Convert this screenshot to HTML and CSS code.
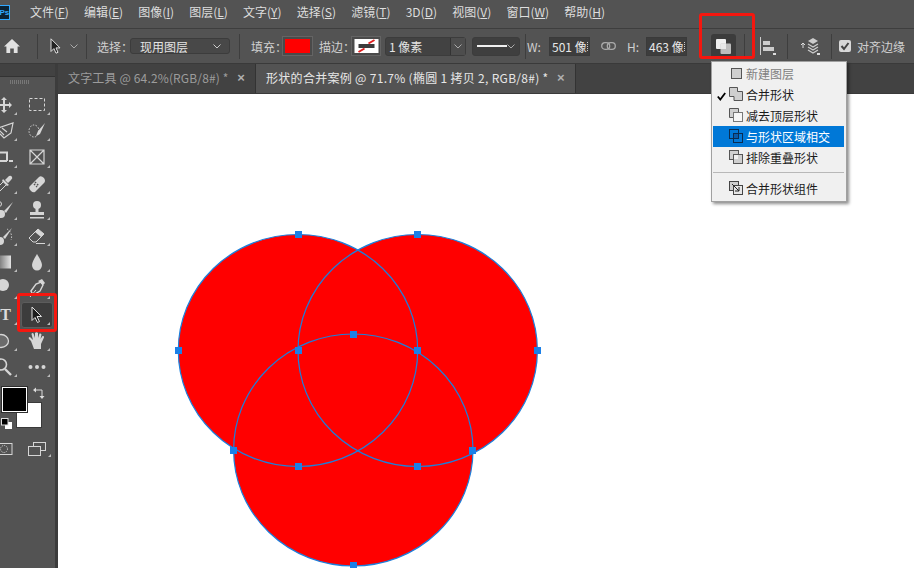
FILE: index.html
```html
<!DOCTYPE html>
<html lang="zh">
<head>
  <meta charset="UTF-8">
  <title>形状的合并案例</title>
  <link rel="stylesheet" href="styles.css">
</head>
<body>
  <nav class="menubar">
    <span class="ps-logo">Ps</span>
    <span class="menu-item">文件(<u>F</u>)</span>
    <span class="menu-item">编辑(<u>E</u>)</span>
    <span class="menu-item">图像(<u>I</u>)</span>
    <span class="menu-item">图层(<u>L</u>)</span>
    <span class="menu-item">文字(<u>Y</u>)</span>
    <span class="menu-item">选择(<u>S</u>)</span>
    <span class="menu-item">滤镜(<u>T</u>)</span>
    <span class="menu-item">3D(<u>D</u>)</span>
    <span class="menu-item">视图(<u>V</u>)</span>
    <span class="menu-item">窗口(<u>W</u>)</span>
    <span class="menu-item">帮助(<u>H</u>)</span>
  </nav>

  <div class="options">
    <svg class="home-icon" width="16" height="14" viewBox="0 0 16 14"><path d="M8 0 L16 7.500 H13.600 V14 H9.800 V9.500 H6.200 V14 H2.400 V7.500 H0 Z" fill="#e2e2e2"/></svg>
    <i class="sep sep-home"></i>
    <svg class="arrow-icon" width="11" height="16" viewBox="0 0 11 16"><path d="M1 .8 V13.500 L3.900 10.600 L6 15.200 L8 14.300 L6 9.900 H10 Z" fill="#222" stroke="#e0e0e0"/></svg>
    <svg class="caret caret-tool" width="8" height="5" viewBox="0 0 8 5"><path d="M.5 .5 L4 4 L7.500 .5" fill="none" stroke="#aaa"/></svg>
    <i class="sep sep-tool"></i>
    <span class="opt-label label-select">选择：</span>
    <div class="dropdown dropdown-layer">现用图层
      <svg class="caret" width="8" height="5" viewBox="0 0 8 5"><path d="M.5 .5 L4 4 L7.500 .5" fill="none" stroke="#ccc"/></svg>
    </div>
    <i class="sep sep-layer"></i>
    <span class="opt-label label-fill">填充：</span>
    <div class="swatch-box"><div class="swatch swatch-red"></div></div>
    <span class="opt-label label-stroke">描边：</span>
    <div class="swatch-box stroke-box">
      <svg class="swatch" width="24" height="14" viewBox="0 0 24 14">
        <rect width="24" height="14" fill="#fff"/>
        <rect x="4" y="5" width="16" height="4" fill="#3c3c3c"/>
        <path d="M20 1 L14 4.500 M10 9.500 L4 13" stroke="#e02020" stroke-width="2"/>
      </svg>
    </div>
    <div class="dropdown dropdown-size"><span class="size-text">1 像素</span><span class="size-arrow"><svg width="8" height="5" viewBox="0 0 8 5"><path d="M.5 .5 L4 4 L7.500 .5" fill="none" stroke="#aaa"/></svg></span></div>
    <div class="dropdown dropdown-line"><i class="line-sample"></i>
      <svg class="caret" width="8" height="5" viewBox="0 0 8 5"><path d="M.5 .5 L4 4 L7.500 .5" fill="none" stroke="#aaa"/></svg>
    </div>
    <i class="sep sep-line"></i>
    <span class="opt-label label-w">W:</span>
    <div class="num-field">501 像</div>
    <svg class="link-icon" width="15" height="8" viewBox="0 0 15 8"><rect x=".7" y=".7" width="8" height="6.600" rx="3.300" fill="none" stroke="#aaa" stroke-width="1.300"/><rect x="6.300" y=".7" width="8" height="6.600" rx="3.300" fill="none" stroke="#aaa" stroke-width="1.300"/></svg>
    <span class="opt-label label-h">H:</span>
    <div class="num-field">463 像</div>
    <div class="shape-btn with-mark">
      <svg width="15" height="15" viewBox="0 0 15 15"><rect x="0" y="0" width="10" height="10" rx="1" fill="#f0f0f0"/><rect x="4.500" y="4.500" width="10.500" height="10.500" rx="1" fill="#bdbdbd"/><path d="M4.500 4.500 H10 V10 H4.500 Z" fill="#e8e8e8"/></svg>
    </div>
    <i class="sep sep-shape"></i>
    <span class="align-icon with-mark"><svg width="15" height="18" viewBox="0 0 15 18"><path d="M.5 0 V18" stroke="#ccc"/><rect x="3" y="4" width="7" height="4" fill="#ccc"/><rect x="3" y="10" width="11" height="4" fill="#ccc"/></svg></span>
    <i class="sep sep-align"></i>
    <span class="stack-icon with-mark"><svg width="19" height="18" viewBox="0 0 19 18"><path d="M3 6 V11 M1 8 L3 6 L5 8" fill="none" stroke="#ddd"/><path d="M13 1 L18 4 L13 7 L8 4 Z" fill="#ccc"/><path d="M8 7 L13 10 L18 7 M8 10 L13 13 L18 10 M8 13 L13 16 L18 13" fill="none" stroke="#ccc" stroke-width="1.300"/></svg></span>
    <i class="sep sep-stack"></i>
    <span class="check-box"><svg width="12" height="12" viewBox="0 0 12 12"><path d="M2.500 6 L5 9 L9.500 3" fill="none" stroke="#444" stroke-width="2"/></svg></span>
    <span class="opt-label label-edges">对齐边缘</span>
  </div>

  <div class="workspace">
    <aside class="toolbar">
      <div class="toolbar-head"></div>
      <i class="grip"></i>
      <div class="tool-grid">
        <div class="tool"><svg width="20" height="20" viewBox="0 0 20 20"><path d="M10 2 L13 5 H11 V9 H15 V7 L18 10 L15 13 V11 H11 V15 H13 L10 18 L7 15 H9 V11 H5 V13 L2 10 L5 7 V9 H9 V5 H7 Z" fill="#d6d6d6"/></svg></div>
        <div class="tool"><svg width="20" height="20" viewBox="0 0 20 20"><rect x="2.500" y="3.500" width="15" height="12" fill="none" stroke="#d6d6d6" stroke-dasharray="3 2"/></svg></div>
        <div class="tool"><svg width="20" height="20" viewBox="0 0 20 20"><path d="M1 8 L19 2 L17 12 L10 17 L6 13 L1 14 M5 9 L10 14 M8 7 L13 11" fill="none" stroke="#d6d6d6" stroke-width="1.200"/></svg></div>
        <div class="tool"><svg width="20" height="20" viewBox="0 0 20 20"><ellipse cx="7" cy="10" rx="5" ry="6" fill="none" stroke="#d6d6d6" stroke-dasharray="1.500 1.500"/><path d="M18 2 L11 10 L9 15 L13 13 Z" fill="#d6d6d6"/></svg></div>
        <div class="tool"><svg width="20" height="20" viewBox="0 0 20 20"><path d="M0 5.500 H13 V14 M0 14 H13 M15 14 H19" fill="none" stroke="#d6d6d6" stroke-width="2"/></svg></div>
        <div class="tool"><svg width="20" height="20" viewBox="0 0 20 20"><path d="M3 3 H17 V17 H3 Z M3 3 L17 17 M17 3 L3 17" fill="none" stroke="#d6d6d6" stroke-width="1.200"/></svg></div>
        <div class="tool"><svg width="20" height="20" viewBox="0 0 20 20"><path d="M10 7 L2 15 L1 19 L5 18 L13 10 Z" fill="none" stroke="#d6d6d6"/><path d="M9 5 L15 11 L13 12 L8 7 Z M11 6 L15 2 Q17 1 18 3 Q19 4 17 6 L14 9 Z" fill="#d6d6d6"/></svg></div>
        <div class="tool"><svg width="20" height="20" viewBox="0 0 20 20"><path d="M3 12 L12 3 Q14 1 17 4 Q19 7 17 9 L8 18 Q6 19 4 17 Q1 14 3 12 Z" fill="#d6d6d6"/><path d="M8 8 L12 12 M7 10 L10 13" stroke="#535353" stroke-width="1.500" stroke-dasharray="1.500 1.500"/></svg></div>
        <div class="tool"><svg width="20" height="20" viewBox="0 0 20 20"><path d="M19 2 L10 11 L12 13 Z" fill="#d6d6d6"/><circle cx="7" cy="14" r="4" fill="#d6d6d6"/><circle cx="5" cy="4" r="2.500" fill="none" stroke="#d6d6d6"/></svg></div>
        <div class="tool"><svg width="20" height="20" viewBox="0 0 20 20"><circle cx="10" cy="5" r="4" fill="#d6d6d6"/><path d="M8.500 8 H11.500 V12 H17 V15 H3 V12 H8.500 Z" fill="#d6d6d6"/><rect x="3" y="17" width="14" height="1.500" fill="#d6d6d6"/></svg></div>
        <div class="tool"><svg width="20" height="20" viewBox="0 0 20 20"><path d="M18 2 L9 11 L11 13 Z" fill="#d6d6d6"/><circle cx="6" cy="15" r="4" fill="#d6d6d6"/><path d="M13 3 A9 9 0 0 1 17 14" fill="none" stroke="#d6d6d6" stroke-dasharray="1.500 1.500"/></svg></div>
        <div class="tool"><svg width="20" height="20" viewBox="0 0 20 20"><path d="M2 12 L11 3 L17 8 L9 16 H6 Z" fill="none" stroke="#d6d6d6"/><path d="M8 6 L11 3 L17 8 L14 11 Z" fill="#d6d6d6"/><path d="M9 17.500 H18" stroke="#d6d6d6"/></svg></div>
        <div class="tool"><svg width="20" height="20" viewBox="0 0 20 20"><defs><linearGradient id="grad"><stop offset="0" stop-color="#3a3a3a"/><stop offset="1" stop-color="#e4e4e4"/></linearGradient></defs><rect x="-2" y="3.500" width="19" height="13" fill="url(#grad)"/></svg></div>
        <div class="tool"><svg width="20" height="20" viewBox="0 0 20 20"><path d="M10 2 Q15 10 15 13 A5 5.500 0 0 1 5 13 Q5 10 10 2 Z" fill="#d6d6d6"/></svg></div>
        <div class="tool"><svg width="20" height="20" viewBox="0 0 20 20"><circle cx="9" cy="7" r="6" fill="#d6d6d6"/><path d="M4 12 L-1 17" stroke="#d6d6d6" stroke-width="3"/></svg></div>
        <div class="tool"><svg width="20" height="20" viewBox="0 0 20 20"><path d="M4 13 L9 6 L14 4 L16 7 L13 13 L6 17 Z" fill="none" stroke="#d6d6d6" stroke-width="1.400"/><path d="M11 3 L15 1 L18 5 L16 7 Z" fill="#d6d6d6"/><path d="M3 19 L9 12" stroke="#d6d6d6"/></svg></div>
        <div class="tool tool-text">T</div>
        <div class="tool tool-active"><svg width="20" height="20" viewBox="0 0 20 20"><path d="M5 2 V15.500 L8 12.500 L10.500 17.500 L12.500 16.500 L10 11.500 H14.500 Z" fill="#1c1c1c" stroke="#e0e0e0"/></svg></div>
        <div class="tool"><svg width="20" height="20" viewBox="0 0 20 20"><ellipse cx="7" cy="10" rx="7.500" ry="6.500" fill="#6b6b6b" stroke="#d6d6d6" stroke-width="1.300"/></svg></div>
        <div class="tool"><svg width="20" height="20" viewBox="0 0 20 20"><path d="M4 10 L2 8 Q1 6 3 6 L6 9 L4.500 3 Q5 1.500 6.500 2.500 L8 7 V2 Q9.500 .5 11 2 V7 L12.500 2.500 Q14 2 14.500 3.500 L13.500 8 L15.500 5 Q17.500 4.500 17 6.500 L14 13 V18 H7 Z" fill="#d6d6d6"/></svg></div>
        <div class="tool"><svg width="20" height="20" viewBox="0 0 20 20"><circle cx="7" cy="7.500" r="5.500" fill="none" stroke="#d6d6d6" stroke-width="1.600"/><path d="M11 12 L17 18" stroke="#d6d6d6" stroke-width="2.400"/></svg></div>
        <div class="tool"><svg width="20" height="20" viewBox="0 0 20 20"><circle cx="3.500" cy="10" r="2" fill="#d6d6d6"/><circle cx="10" cy="10" r="2" fill="#d6d6d6"/><circle cx="16.500" cy="10" r="2" fill="#d6d6d6"/></svg></div>
      </div>

      <div class="colors">
        <div class="color-fg"></div>
        <div class="color-bg"></div>
        <svg class="color-swap" width="12" height="12" viewBox="0 0 12 12"><path d="M2 3 H9 V9" fill="none" stroke="#ddd"/><path d="M0 3 L3 .5 V5.500 Z M9 12 L6.500 9 H11.500 Z" fill="#ddd"/></svg>
        <svg class="color-default" width="11" height="11" viewBox="0 0 11 11"><rect x="4" y="4" width="7" height="7" fill="#fff"/><rect x=".5" y=".5" width="6.500" height="6.500" fill="#000" stroke="#ddd"/></svg>
      </div>

      <div class="tool-bottom">
        <svg width="14" height="13" viewBox="0 0 14 13"><rect x="-3" y=".5" width="15" height="11" fill="none" stroke="#d6d6d6"/><circle cx="4" cy="6" r="3.500" fill="none" stroke="#d6d6d6" stroke-dasharray="1 1"/></svg>
        <span class="screen-mode"><svg width="18" height="14" viewBox="0 0 18 14"><rect x="5.500" y=".5" width="12" height="8" fill="none" stroke="#d6d6d6"/><rect x=".5" y="4.500" width="12" height="9" fill="#535353" stroke="#d6d6d6"/></svg></span>
      </div>
    </aside>

    <div class="doc-area">
      <div class="tabs">
        <div class="tab tab-off"><span>文字工具 @ 64.2%(RGB/8#) *</span><span class="tab-close">×</span></div>
        <div class="tab tab-on"><span>形状的合并案例 @ 71.7% (椭圆 1 拷贝 2, RGB/8#) *</span><span class="tab-close">×</span></div>
      </div>
      <div class="canvas">
        <svg class="art" width="856" height="474" viewBox="58 94 856 474">
          <g fill="#ff0000">
            <ellipse cx="298" cy="350.500" rx="119.700" ry="116"/>
            <ellipse cx="417.700" cy="350.500" rx="119.700" ry="116"/>
            <ellipse cx="353.300" cy="450" rx="119.700" ry="116"/>
          </g>
          <g fill="none" stroke="#1b80dd" stroke-width="1.200">
            <ellipse cx="298" cy="350.500" rx="119.700" ry="116"/>
            <ellipse cx="417.700" cy="350.500" rx="119.700" ry="116"/>
            <ellipse cx="353.300" cy="450" rx="119.700" ry="116"/>
          </g>
          <g fill="#1b80e8">
            <rect x="295" y="231" width="7" height="7"/>
            <rect x="414" y="231" width="7" height="7"/>
            <rect x="175" y="347" width="7" height="7"/>
            <rect x="295" y="347" width="7" height="7"/>
            <rect x="414" y="347" width="7" height="7"/>
            <rect x="534" y="347" width="7" height="7"/>
            <rect x="350" y="331" width="7" height="7"/>
            <rect x="230" y="447" width="7" height="7"/>
            <rect x="469" y="447" width="7" height="7"/>
            <rect x="295" y="463" width="7" height="7"/>
            <rect x="414" y="463" width="7" height="7"/>
            <rect x="350" y="562" width="7" height="7"/>
          </g>
        </svg>
      </div>
    </div>
  </div>

  <ul class="shape-menu">
    <li class="menu-row row-disabled"><svg width="14" height="14" viewBox="0 0 14 14"><rect x="2.500" y="2.500" width="10" height="10" fill="#cfcfcf" stroke="#555"/></svg>新建图层</li>
    <li class="menu-row"><svg class="row-check" width="9" height="9" viewBox="0 0 9 9"><path d="M.8 4.500 L3.300 7.500 L8.200 1" fill="none" stroke="#000" stroke-width="1.800"/></svg><svg width="14" height="14" viewBox="0 0 14 14"><path d="M.5 .5 H8.500 V4.500 H13.500 V13.500 H5 V9.500 H.5 Z" fill="#cfcfcf" stroke="#555"/></svg>合并形状</li>
    <li class="menu-row"><svg width="14" height="14" viewBox="0 0 14 14"><path d="M.5 9.500 V.5 H9.500 V4.500 H4.500 V9.500 Z" fill="#cfcfcf" stroke="#555"/><rect x="4.500" y="4.500" width="9" height="9" fill="#f6f6f6" stroke="#777"/></svg>减去顶层形状</li>
    <li class="menu-row row-hover"><svg width="14" height="14" viewBox="0 0 14 14"><rect x=".5" y=".5" width="9" height="9" fill="none" stroke="#0b2c50"/><rect x="4.500" y="4.500" width="9" height="9" fill="none" stroke="#0b2c50"/><rect x="5" y="5" width="4" height="4" fill="#0a5aa8"/></svg>与形状区域相交</li>
    <li class="menu-row"><svg width="14" height="14" viewBox="0 0 14 14"><rect x=".5" y=".5" width="9" height="9" fill="#cfcfcf" stroke="#555"/><rect x="4.500" y="4.500" width="9" height="9" fill="#cfcfcf" stroke="#555"/><rect x="5" y="5" width="4" height="4" fill="#f0f0f0"/></svg>排除重叠形状</li>
    <li class="menu-sep"></li>
    <li class="menu-row"><svg width="14" height="14" viewBox="0 0 14 14"><rect x=".5" y=".5" width="9" height="9" fill="#cfcfcf" stroke="#444"/><rect x="4.500" y="4.500" width="9" height="9" fill="#e6e6e6" stroke="#444"/><path d="M3 3 L10 10 M10 6 V10 H6" fill="none" stroke="#222"/></svg>合并形状组件</li>
  </ul>

  <div class="callout callout-shape"></div>
  <div class="callout callout-tool"></div>
</body>
</html>
```
FILE: styles.css
```css
* {
  box-sizing: border-box;
}

html, body {
  margin: 0;
  padding: 0;
  width: 914px;
  height: 568px;
  overflow: hidden;
}

body {
  font-family: "Noto Sans CJK SC", "Liberation Sans", sans-serif;
  font-size: 12px;
  color: #dedede;
  background-color: #535353;
  display: flex;
  flex-direction: column;
}

svg {
  display: block;
  flex-shrink: 0;
}

/* top menu */
.menubar {
  height: 29px;
  flex-shrink: 0;
  display: flex;
  align-items: center;
  padding-bottom: 4px;
  border-bottom: 1px solid #3e3e3e;
  overflow: hidden;
}

.ps-logo {
  width: 24px;
  height: 15px;
  margin-left: -14px;
  margin-right: 20px;
  background-color: #0c2233;
  border: 1px solid #31a8ff;
  color: #31a8ff;
  font: bold 8px/13px "Liberation Sans", sans-serif;
  letter-spacing: -0.2px;
  text-align: right;
}

.menu-item {
  margin-right: 15.2px;
  line-height: 18px;
  white-space: nowrap;
}

/* options bar */
.options {
  height: 35px;
  flex-shrink: 0;
  display: flex;
  align-items: center;
  border-bottom: 1px solid #3a3a3a;
}

.sep {
  width: 1px;
  height: 25px;
  background-color: #3e3e3e;
  flex-shrink: 0;
}

.home-icon { margin-left: 4px; }
.sep-home { margin-left: 17px; }
.arrow-icon { margin-left: 12px; }
.caret-tool { margin-left: 9px; }
.sep-tool { margin-left: 8px; }
.label-select { margin-left: 10px; }
.sep-layer { margin-left: 9px; }
.label-fill { margin-left: 11px; }
.label-stroke { margin: 0 3px 0 6px; }
.sep-line { margin-left: 5px; }
.label-w { margin-left: 1px; width: 22px; color: #b0b0b0; }
.link-icon { margin-left: 11px; }
.label-h { margin-left: 11px; width: 19px; color: #b0b0b0; }
.sep-shape { margin-left: 8px; }
.align-icon { margin-left: 15px; }
.sep-align { margin-left: 12px; }
.stack-icon { margin-left: 12px; }
.sep-stack { margin-left: 12px; }

.opt-label {
  color: #d0d0d0;
  white-space: nowrap;
  flex-shrink: 0;
}

.label-select, .label-fill, .label-stroke {
  width: 29px;
}

.label-select { margin-right: 4px; }
.label-fill { margin-right: 2px; }

.dropdown {
  height: 16px;
  display: flex;
  align-items: center;
  justify-content: space-between;
  background-color: #484848;
  border: 1px solid #3c3c3c;
  border-radius: 3px;
  flex-shrink: 0;
  white-space: nowrap;
}

.dropdown-layer {
  width: 100px;
  padding: 0 8px 0 9px;
  color: #e4e4e4;
}

.dropdown-size {
  width: 81px;
  height: 19px;
  margin-left: 4px;
  background-color: #424242;
}

.size-text {
  flex-grow: 1;
  padding-left: 3px;
  color: #e4e4e4;
}

.size-arrow {
  width: 15px;
  height: 100%;
  border-left: 1px solid #333;
  background-color: #4d4d4d;
  display: flex;
  align-items: center;
  justify-content: center;
}

.dropdown-line {
  width: 48px;
  height: 19px;
  margin-left: 6px;
  padding: 0 4px;
  background-color: #3f3f3f;
}

.line-sample {
  width: 30px;
  height: 2px;
  background-color: #f0f0f0;
}

.swatch-box {
  width: 31px;
  height: 20px;
  flex-shrink: 0;
  display: flex;
  align-items: center;
  justify-content: center;
  border: 1px solid #646464;
  background-color: #4a4a4a;
}

.stroke-box {
  width: 30px;
}

.swatch {
  width: 25px;
  height: 14px;
}

.swatch-red {
  background-color: #ff0000;
}

.num-field {
  position: relative;
  width: 41px;
  height: 19px;
  flex-shrink: 0;
  padding-left: 2px;
  line-height: 17px;
  white-space: nowrap;
  background-color: #3d3d3d;
  border: 1px solid #3a3a3a;
  color: #e8e8e8;
}

/* leftover of the cut off last character */
.num-field::after {
  content: "";
  position: absolute;
  right: 1px;
  top: 4px;
  height: 9px;
  border-right: 1px dotted #c8c8c8;
}

.shape-btn {
  width: 25px;
  height: 25px;
  margin-left: 24px;
  flex-shrink: 0;
  display: flex;
  align-items: center;
  justify-content: center;
  background-color: #3c3c3c;
  border-radius: 3px;
}

.with-mark {
  position: relative;
}

.with-mark::after {
  content: "";
  position: absolute;
  right: -1px;
  bottom: 0;
  width: 3px;
  height: 2px;
  background-color: #ddd;
}

.align-icon, .stack-icon {
  flex-shrink: 0;
}

.check-box {
  width: 12px;
  height: 12px;
  margin-left: 7px;
  margin-right: 6px;
  flex-shrink: 0;
  background-color: #d8d8d8;
  border-radius: 2px;
}

/* left tools + document */
.workspace {
  flex-grow: 1;
  display: flex;
  min-height: 0;
}

.toolbar {
  width: 58px;
  flex-shrink: 0;
  border-right: 3px solid #3c3c3c;
  overflow: hidden;
}

.toolbar-head {
  height: 13px;
  background-color: #424242;
  border-bottom: 1px solid #333;
}

.grip {
  display: block;
  width: 19px;
  height: 4px;
  margin: 3px 0 0 10px;
  background: repeating-linear-gradient(90deg, #777 0 1px, transparent 1px 2px);
}

.tool-grid {
  display: grid;
  grid-template-columns: 26px 26px;
  grid-auto-rows: 26.2px;
  column-gap: 7px;
  margin: 8px 0 0 -9px;
  width: 70px;
}

.tool {
  position: relative;
  display: flex;
  align-items: center;
  justify-content: center;
}

.tool::after {
  content: "";
  position: absolute;
  right: 0;
  bottom: 3px;
  border-left: 3px solid transparent;
  border-bottom: 3px solid #bbb;
}

.tool-text {
  font: bold 16px "Liberation Serif", serif;
  color: #dcdcdc;
  padding-left: 3px;
}

.tool-active {
  margin: 0 -3px;
  background-color: #3c3c3c;
  border: 1px solid #5c5c5c;
  border-radius: 3px;
}

.tool-active::after {
  right: 2px;
  bottom: 2px;
}

.colors {
  position: relative;
  height: 46px;
  margin-top: 7px;
}

.color-fg {
  position: absolute;
  left: 2px;
  top: 0;
  width: 25px;
  height: 25px;
  background-color: #000;
  border: 1px solid #fff;
  outline: 1px solid #2e2e2e;
  z-index: 1;
}

.color-bg {
  position: absolute;
  left: 16px;
  top: 15px;
  width: 26px;
  height: 26px;
  background-color: #fff;
  border: 1px solid #3a3a3a;
}

.color-swap {
  position: absolute;
  left: 33px;
  top: 0;
}

.color-default {
  position: absolute;
  left: 1px;
  top: 31px;
}

.tool-bottom {
  display: flex;
  align-items: center;
  gap: 14px;
  margin-top: 9px;
}

.screen-mode {
  position: relative;
}

.screen-mode::after {
  content: "";
  position: absolute;
  right: -5px;
  bottom: -1px;
  border-left: 3px solid transparent;
  border-bottom: 3px solid #bbb;
}

.doc-area {
  flex-grow: 1;
  display: flex;
  flex-direction: column;
  min-width: 0;
}

.tabs {
  height: 30px;
  flex-shrink: 0;
  display: flex;
  background-color: #424242;
  border-bottom: 1px solid #3a3a3a;
}

.tab {
  display: flex;
  align-items: center;
  justify-content: space-between;
  padding: 0 10px 2px 10px;
  white-space: nowrap;
  border-right: 1px solid #333;
}

.tab-off {
  width: 198px;
  color: #9c9c9c;
  background-color: #424242;
  letter-spacing: 0.15px;
}

.tab-on {
  width: 320px;
  color: #e6e6e6;
  background-color: #535353;
  letter-spacing: 0.3px;
}

.tab-close {
  font: bold 13px "Liberation Sans", sans-serif;
  color: #b0b0b0;
}

.canvas {
  flex-grow: 1;
  background-color: #fff;
  overflow: hidden;
}

/* shape ops popup */
.shape-menu {
  position: absolute;
  left: 711px;
  top: 61px;
  width: 136px;
  height: 141px;
  margin: 0;
  padding: 1px 2px 0 1px;
  list-style: none;
  background-color: #f0f0f0;
  border: 1px solid #a0a0a0;
  box-shadow: 2px 2px 3px rgba(0, 0, 0, 0.45);
  color: #1a1a1a;
}

.menu-row {
  position: relative;
  height: 21px;
  padding-left: 33px;
  line-height: 21px;
  white-space: nowrap;
}

.menu-row svg {
  position: absolute;
  left: 16px;
  top: 3px;
}

.menu-row .row-check {
  left: 4px;
  top: 8px;
}

.row-disabled {
  color: #808080;
}

.row-hover {
  background-color: #0078d7;
  color: #fff;
}

.menu-sep {
  height: 1px;
  margin: 4px 0 5px;
  background-color: #b8b8b8;
}

/* red annotation boxes */
.callout {
  position: absolute;
  border: 3px solid #f5170f;
  border-radius: 3px;
}

.callout-shape {
  left: 699px;
  top: 13px;
  width: 56px;
  height: 46px;
}

.callout-tool {
  left: 17px;
  top: 293px;
  width: 40px;
  height: 39px;
}
```
